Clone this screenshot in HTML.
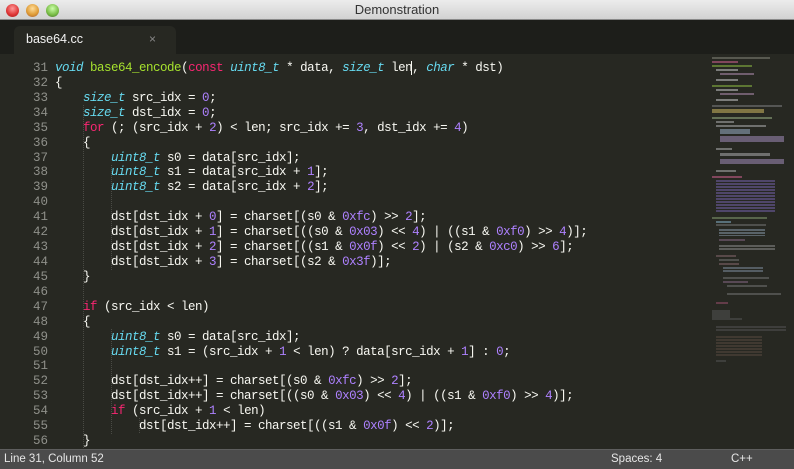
<!DOCTYPE html>
<html><head><meta charset="utf-8"><style>
*{margin:0;padding:0;box-sizing:border-box}
body{width:794px;height:469px;overflow:hidden;background:#272822;font-family:"Liberation Sans",sans-serif;position:relative}
#title{position:absolute;left:0;top:0;width:794px;height:20px;background:linear-gradient(#ececec,#d2d2d2);border-bottom:1px solid #8a8a8a;text-align:center;font-size:13px;line-height:20px;color:#333}
.tl{position:absolute;top:4px;width:13px;height:13px;border-radius:50%}
#tabbar{position:absolute;left:0;top:20px;width:794px;height:34px;background:#1d1e1a}
#tab{position:absolute;left:14px;top:26px;width:162px;height:28px;background:#272822;border-radius:6px 6px 0 0;color:#f2f2f2;font-size:12.5px;line-height:27px;padding-left:12px}
#tab span{position:absolute;right:20px;top:0;color:#888;font-size:12px}
#code{position:absolute;left:0;top:61px;font-family:"Liberation Mono",monospace;font-size:12.5px;letter-spacing:-0.5px;line-height:14.92px;color:#f8f8f2;white-space:pre}
.ln{display:inline-block;width:48px;text-align:right;color:#8f908a;margin-right:7px;letter-spacing:0}
.t{color:#66d9ef;font-style:italic}.k{color:#f92672}.f{color:#a6e22e}.n{color:#ae81ff}
#status{position:absolute;left:0;top:449px;width:794px;height:20px;background:#4b4b4b;border-top:1px solid #5e5e5e;color:#e6e6e6;font-size:11.5px;line-height:19px}
.g{position:absolute;border-left:1px dotted #4a4b45;width:0}
.m{position:absolute;height:2px;opacity:.75}
.s{position:absolute;background:repeating-linear-gradient(#000 0 0);opacity:.55}
</style></head><body>
<div id="title">Demonstration
<div class="tl" style="left:6px;background:radial-gradient(circle at 50% 35%,#f99,#d33 60%,#922)"></div>
<div class="tl" style="left:26px;background:radial-gradient(circle at 50% 35%,#fd9,#d93 60%,#954)"></div>
<div class="tl" style="left:46px;background:radial-gradient(circle at 50% 35%,#cfa,#7b4 60%,#463)"></div>
</div>
<div id="tabbar"></div>
<div id="tab">base64.cc<span>×</span></div>
<div class="g" style="left:83px;top:105px;height:343px"></div>
<div class="g" style="left:111px;top:165px;height:105px"></div>
<div class="g" style="left:111px;top:329px;height:105px"></div>
<div class="g" style="left:139px;top:418px;height:15px"></div>
<div id="code"><span class="ln">31</span><span class="t">void</span> <span class="f">base64_encode</span>(<span class="k">const</span> <span class="t">uint8_t</span> * data, <span class="t">size_t</span> len<span style="border-left:1px solid #f8f8f2;margin-left:-1px"></span>, <span class="t">char</span> * dst)
<span class="ln">32</span>{
<span class="ln">33</span>    <span class="t">size_t</span> src_idx = <span class="n">0</span>;
<span class="ln">34</span>    <span class="t">size_t</span> dst_idx = <span class="n">0</span>;
<span class="ln">35</span>    <span class="k">for</span> (; (src_idx + <span class="n">2</span>) &lt; len; src_idx += <span class="n">3</span>, dst_idx += <span class="n">4</span>)
<span class="ln">36</span>    {
<span class="ln">37</span>        <span class="t">uint8_t</span> s0 = data[src_idx];
<span class="ln">38</span>        <span class="t">uint8_t</span> s1 = data[src_idx + <span class="n">1</span>];
<span class="ln">39</span>        <span class="t">uint8_t</span> s2 = data[src_idx + <span class="n">2</span>];
<span class="ln">40</span>
<span class="ln">41</span>        dst[dst_idx + <span class="n">0</span>] = charset[(s0 &amp; <span class="n">0xfc</span>) &gt;&gt; <span class="n">2</span>];
<span class="ln">42</span>        dst[dst_idx + <span class="n">1</span>] = charset[((s0 &amp; <span class="n">0x03</span>) &lt;&lt; <span class="n">4</span>) | ((s1 &amp; <span class="n">0xf0</span>) &gt;&gt; <span class="n">4</span>)];
<span class="ln">43</span>        dst[dst_idx + <span class="n">2</span>] = charset[((s1 &amp; <span class="n">0x0f</span>) &lt;&lt; <span class="n">2</span>) | (s2 &amp; <span class="n">0xc0</span>) &gt;&gt; <span class="n">6</span>];
<span class="ln">44</span>        dst[dst_idx + <span class="n">3</span>] = charset[(s2 &amp; <span class="n">0x3f</span>)];
<span class="ln">45</span>    }
<span class="ln">46</span>
<span class="ln">47</span>    <span class="k">if</span> (src_idx &lt; len)
<span class="ln">48</span>    {
<span class="ln">49</span>        <span class="t">uint8_t</span> s0 = data[src_idx];
<span class="ln">50</span>        <span class="t">uint8_t</span> s1 = (src_idx + <span class="n">1</span> &lt; len) ? data[src_idx + <span class="n">1</span>] : <span class="n">0</span>;
<span class="ln">51</span>
<span class="ln">52</span>        dst[dst_idx++] = charset[(s0 &amp; <span class="n">0xfc</span>) &gt;&gt; <span class="n">2</span>];
<span class="ln">53</span>        dst[dst_idx++] = charset[((s0 &amp; <span class="n">0x03</span>) &lt;&lt; <span class="n">4</span>) | ((s1 &amp; <span class="n">0xf0</span>) &gt;&gt; <span class="n">4</span>)];
<span class="ln">54</span>        <span class="k">if</span> (src_idx + <span class="n">1</span> &lt; len)
<span class="ln">55</span>            dst[dst_idx++] = charset[((s1 &amp; <span class="n">0x0f</span>) &lt;&lt; <span class="n">2</span>)];
<span class="ln">56</span>    }</div>
<div id="mini">
<div class="m" style="left:712px;top:57px;width:58px;background:#6a6a60"></div>
<div class="m" style="left:712px;top:61px;width:26px;background:#a05070"></div>
<div class="m" style="left:712px;top:65px;width:40px;background:#70903a"></div>
<div class="m" style="left:716px;top:69px;width:22px;background:#999"></div>
<div class="m" style="left:720px;top:73px;width:34px;background:#8a7088"></div>
<div class="m" style="left:716px;top:79px;width:22px;background:#999"></div>
<div class="m" style="left:712px;top:85px;width:40px;background:#70903a"></div>
<div class="m" style="left:716px;top:89px;width:22px;background:#999"></div>
<div class="m" style="left:720px;top:93px;width:34px;background:#8a7088"></div>
<div class="m" style="left:716px;top:99px;width:22px;background:#999"></div>
<div class="m" style="left:712px;top:105px;width:70px;background:#666"></div>
<div class="m" style="left:712px;top:109px;width:52px;background:#a09050;height:4px"></div>
<div class="m" style="left:712px;top:117px;width:60px;background:#7a8a6a"></div>
<div class="m" style="left:716px;top:121px;width:18px;background:#888"></div>
<div class="m" style="left:716px;top:125px;width:50px;background:#888"></div>
<div class="m" style="left:720px;top:129px;width:30px;background:#7a8898;height:5px"></div>
<div class="m" style="left:720px;top:136px;width:64px;background:#807090;height:6px"></div>
<div class="m" style="left:716px;top:148px;width:16px;background:#888"></div>
<div class="m" style="left:720px;top:153px;width:50px;background:#888;height:3px"></div>
<div class="m" style="left:720px;top:159px;width:64px;background:#807090;height:5px"></div>
<div class="m" style="left:716px;top:170px;width:20px;background:#888"></div>
<div class="m" style="left:712px;top:176px;width:30px;background:#a05070"></div>
<div class="m" style="left:716px;top:180px;width:59px;height:32px;background:repeating-linear-gradient(#6a5a9a 0 2px,transparent 2px 3px);opacity:.6"></div>
<div class="m" style="left:712px;top:217px;width:55px;background:#6a7a5a"></div>
<div class="m" style="left:716px;top:221px;width:15px;background:#6a8898"></div>
<div class="m" style="left:716px;top:224px;width:50px;background:#777;opacity:.5"></div>
<div class="m" style="left:719px;top:229px;width:46px;height:7px;background:repeating-linear-gradient(#7a8a98 0 2px,transparent 2px 3px);opacity:.6"></div>
<div class="m" style="left:719px;top:239px;width:26px;background:#8a6a88;opacity:.5"></div>
<div class="m" style="left:719px;top:245px;width:56px;height:6px;background:repeating-linear-gradient(#888 0 2px,transparent 2px 3px);opacity:.55"></div>
<div class="m" style="left:716px;top:255px;width:20px;background:#8a6a70;opacity:.5"></div>
<div class="m" style="left:719px;top:259px;width:20px;background:#777;opacity:.5"></div>
<div class="m" style="left:719px;top:263px;width:20px;background:#8a6a70;opacity:.5"></div>
<div class="m" style="left:723px;top:267px;width:40px;height:6px;background:repeating-linear-gradient(#7a8898 0 2px,transparent 2px 3px);opacity:.55"></div>
<div class="m" style="left:723px;top:277px;width:46px;background:#777;opacity:.5"></div>
<div class="m" style="left:723px;top:281px;width:25px;background:#8a6a88;opacity:.5"></div>
<div class="m" style="left:727px;top:285px;width:40px;background:#777;opacity:.5"></div>
<div class="m" style="left:727px;top:293px;width:54px;background:#777;opacity:.5"></div>
<div class="m" style="left:716px;top:302px;width:12px;background:#a05070;opacity:.5"></div>
<div class="m" style="left:712px;top:310px;width:18px;height:8px;background:#555;opacity:.5"></div>
<div class="m" style="left:712px;top:318px;width:30px;background:#555;opacity:.5"></div>
<div class="m" style="left:716px;top:326px;width:70px;height:6px;background:repeating-linear-gradient(#555 0 2px,transparent 2px 3px);opacity:.5"></div>
<div class="m" style="left:716px;top:336px;width:46px;height:20px;background:repeating-linear-gradient(#5a4a40 0 2px,transparent 2px 3px);opacity:.5"></div>
<div class="m" style="left:716px;top:360px;width:10px;background:#555;opacity:.5"></div>
</div>
<div id="status"><span style="position:absolute;left:4px">Line 31, Column 52</span><span style="position:absolute;left:611px">Spaces: 4</span><span style="position:absolute;left:731px">C++</span></div>
</body></html>
